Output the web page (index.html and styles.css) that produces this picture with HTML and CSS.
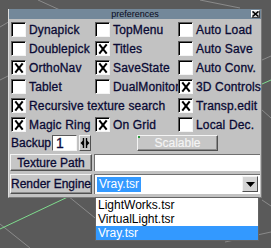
FILE: index.html
```html
<!DOCTYPE html>
<html>
<head>
<meta charset="utf-8">
<link rel="stylesheet" href="styles.css">
</head>
<body>
<div class="desk">
  <svg class="viewport" width="271" height="248" viewBox="0 0 271 248">
    <g stroke="#8a8a8a" stroke-width="1" fill="none">
      <line x1="0" y1="27" x2="22" y2="14"/>
      <line x1="38" y1="0" x2="60" y2="10"/>
      <line x1="0" y1="80" x2="8" y2="76"/>
      <line x1="200" y1="0" x2="240" y2="8"/>
      <line x1="262" y1="60" x2="271" y2="56"/>
      <line x1="262" y1="110" x2="271" y2="118"/>
      <line x1="68" y1="196" x2="100" y2="222"/>
      <line x1="0" y1="224" x2="30" y2="248"/>
      <line x1="225" y1="242" x2="271" y2="232"/>
      <line x1="262" y1="200" x2="271" y2="206"/>
    </g>
    <g stroke="#7fdc8e" stroke-width="1" fill="none">
      <line x1="0" y1="229" x2="72" y2="195"/>
      <line x1="262" y1="84" x2="271" y2="80"/>
    </g>
  </svg>

  <div class="win">
    <div class="titlebar">
      <span class="title">preferences</span>
      <span class="close">
        <svg width="7" height="6" viewBox="0 0 7 6"><path d="M0.5 0.5 L6.5 5.5 M6.5 0.5 L0.5 5.5" stroke="#000" stroke-width="1.6"/></svg>
      </span>
    </div>
    <div class="body">
      <div class="checks">
        <label class="opt"><span class="cb"></span>Dynapick</label>
        <label class="opt"><span class="cb"></span>TopMenu</label>
        <label class="opt"><span class="cb"></span>Auto Load</label>

        <label class="opt"><span class="cb"></span>Doublepick</label>
        <label class="opt"><span class="cb on"></span>Titles</label>
        <label class="opt"><span class="cb"></span>Auto Save</label>

        <label class="opt"><span class="cb on"></span>OrthoNav</label>
        <label class="opt"><span class="cb on"></span>SaveState</label>
        <label class="opt"><span class="cb"></span>Auto Conv.</label>

        <label class="opt"><span class="cb"></span>Tablet</label>
        <label class="opt"><span class="cb"></span>DualMonitor</label>
        <label class="opt"><span class="cb on"></span>3D Controls</label>

        <label class="opt span2"><span class="cb on"></span>Recursive texture search</label>
        <label class="opt"><span class="cb on"></span>Transp.edit</label>

        <label class="opt"><span class="cb on"></span>Magic Ring</label>
        <label class="opt"><span class="cb on"></span>On Grid</label>
        <label class="opt"><span class="cb"></span>Local Dec.</label>
      </div>

      <div class="backup-row">
        <span class="lbl">Backup</span>
        <span class="num">1</span>
        <span class="spin">
          <svg width="10" height="12" viewBox="0 0 10 12">
            <path d="M3.5 1 V11 M6.5 1 V11" stroke="#000" stroke-width="1.4"/>
            <path d="M0.5 6 L3.5 3 V9 Z M9.5 6 L6.5 3 V9 Z" fill="#000"/>
          </svg>
        </span>
        <span class="btn disabled scal"><i class="dot"></i>Scalable</span>
      </div>

      <div class="path-row">
        <span class="btn lbtn">Texture Path</span>
        <span class="field"></span>
      </div>

      <div class="render-row">
        <span class="btn lbtn tall">Render Engine</span>
        <span class="combo">
          <span class="sel">Vray.tsr</span>
          <span class="arrow">
            <svg width="9" height="5" viewBox="0 0 9 5"><path d="M0 0 H9 L4.5 5 Z" fill="#000"/></svg>
          </span>
        </span>
      </div>
    </div>
  </div>

  <ul class="list">
    <li>LightWorks.tsr</li>
    <li>VirtualLight.tsr</li>
    <li class="hi">Vray.tsr</li>
  </ul>
</div>
</body>
</html>
```

FILE: styles.css
```css
* { box-sizing: border-box; }
html, body { margin: 0; padding: 0; }
body {
  font-family: "Liberation Sans", Arial, sans-serif;
  background: #5a5a5a;
}
.desk {
  position: relative;
  width: 271px;
  height: 248px;
  background: #5a5a5a;
  overflow: hidden;
}
.viewport {
  position: absolute;
  left: 0;
  top: 0;
}
.win {
  position: absolute;
  left: 8px;
  top: 9px;
  width: 254px;
  height: 189px;
  background: #c2c2c2;
  border-left: 1px solid #dedede;
  border-right: 1px solid #7a7a7a;
  border-bottom: 1px solid #7a7a7a;
}
.titlebar {
  position: relative;
  height: 10px;
  background: #73889a;
  display: flex;
  align-items: center;
  justify-content: center;
}
.title {
  font-size: 9px;
  line-height: 10px;
  color: #0a0a1a;
}
.close {
  position: absolute;
  right: 1px;
  top: 1px;
  width: 9px;
  height: 8px;
  background: #d8d8d8;
  border-top: 1px solid #fff;
  border-left: 1px solid #fff;
  border-right: 1px solid #404040;
  border-bottom: 1px solid #404040;
  display: flex;
  align-items: center;
  justify-content: center;
}
.close svg { display: block; }
.body {
  padding: 1px 0 0 2px;
  color: #0a0a34;
  font-size: 12px;
  -webkit-text-stroke: 0.3px #0a0a34;
}
.checks {
  display: grid;
  grid-template-columns: 84px 83px 84px;
  grid-auto-rows: 19px;
}
.opt {
  display: flex;
  align-items: center;
  gap: 3px;
  white-space: nowrap;
  line-height: 14px;
  letter-spacing: 0.15px;
}
.span2 { grid-column: span 2; }
.cb {
  position: relative;
  flex: none;
  width: 15px;
  height: 15px;
  background: #fff;
  border-top: 1px solid #5a5a5a;
  border-left: 1px solid #5a5a5a;
  border-right: 1px solid #f4f4f4;
  border-bottom: 1px solid #f4f4f4;
  box-shadow: inset 1px 1px 0 #000;
}
.cb.on::before,
.cb.on::after {
  content: "";
  position: absolute;
  left: 6px;
  top: 1px;
  width: 2px;
  height: 12px;
  background: #000;
  transform: rotate(38deg);
}
.cb.on::after { transform: rotate(-38deg); }

.backup-row {
  display: flex;
  align-items: center;
  height: 18px;
}
.lbl { width: 41px; }
.num {
  width: 25px;
  height: 16px;
  background: #fff;
  border-top: 1px solid #5a5a5a;
  border-left: 1px solid #5a5a5a;
  border-right: 1px solid #f4f4f4;
  border-bottom: 1px solid #f4f4f4;
  font-size: 14px;
  line-height: 14px;
  padding-left: 3px;
  color: #0a0a40;
}
.spin {
  width: 12px;
  height: 16px;
  margin-left: 2px;
  background: #c8c8c8;
  border-top: 1px solid #f4f4f4;
  border-left: 1px solid #f4f4f4;
  border-right: 1px solid #505050;
  border-bottom: 1px solid #505050;
  display: flex;
  align-items: center;
  justify-content: center;
}
.spin svg { display: block; }
.btn {
  display: flex;
  align-items: center;
  justify-content: center;
  background: #c6c6c6;
  border-top: 1px solid #f4f4f4;
  border-left: 1px solid #f4f4f4;
  border-right: 1px solid #505050;
  border-bottom: 1px solid #505050;
  box-shadow: inset -1px -1px 0 #8c8c8c;
  white-space: nowrap;
}
.scal {
  position: relative;
  margin-left: 46px;
  width: 81px;
  height: 16px;
  color: #f4f4f4;
  -webkit-text-stroke: 0.2px #f4f4f4;
}
.dot {
  position: absolute;
  left: 0;
  top: 0;
  width: 2px;
  height: 2px;
  background: #2c9a3c;
}
.path-row {
  display: flex;
  margin-top: 2px;
  height: 17px;
}
.lbtn {
  margin-left: -1px;
  width: 82px;
  height: 17px;
}
.field {
  margin-left: 2px;
  width: 166px;
  height: 17px;
  background: #fff;
  border-top: 1px solid #707070;
  border-left: 1px solid #707070;
}
.render-row {
  display: flex;
  margin-top: 3px;
  height: 20px;
}
.lbtn.tall { height: 20px; }
.combo {
  position: relative;
  margin-left: 2px;
  width: 166px;
  height: 20px;
  background: #fff;
  border-top: 1px solid #707070;
  border-left: 1px solid #707070;
  display: flex;
  align-items: center;
}
.sel {
  margin-left: 2px;
  padding: 0 2px;
  height: 15px;
  line-height: 15px;
  background: #3399ff;
  color: #fff;
  -webkit-text-stroke: 0;
  font-size: 12px;
}
.arrow {
  position: absolute;
  right: 2px;
  top: 1px;
  width: 16px;
  height: 16px;
  background: #d4d4d4;
  border-top: 1px solid #f4f4f4;
  border-left: 1px solid #f4f4f4;
  border-right: 1px solid #505050;
  border-bottom: 1px solid #505050;
  display: flex;
  align-items: center;
  justify-content: center;
}
.arrow svg { display: block; }
.list {
  position: absolute;
  left: 95px;
  top: 197px;
  width: 164px;
  margin: 0;
  padding: 0;
  list-style: none;
  background: #fff;
  border: 1px solid #646464;
  font-size: 12px;
  color: #000;
}
.list li {
  height: 14px;
  line-height: 14px;
  padding-left: 2px;
}
.list li.hi {
  background: #3399ff;
  color: #fff;
}
```
